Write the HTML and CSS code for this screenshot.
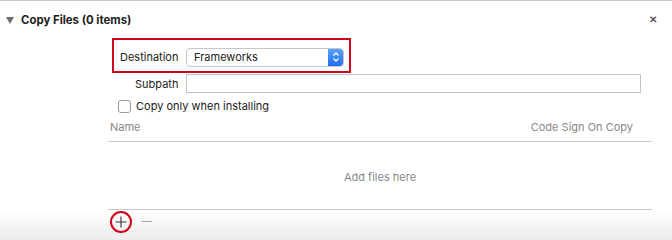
FILE: index.html
```html
<!DOCTYPE html>
<html lang="en">
<head>
	<meta charset="utf-8">
	<title>Copy Files</title>
	<link rel="stylesheet" href="styles.css">
</head>
<body>
	<div class="phase">
		<div class="phaseHead">
			<span class="disclosure"></span>
			<strong class="phaseTitle">Copy Files (0 items)</strong>
			<button type="button" class="btnClose">&#x2715;</button>
		</div>
		<div class="phaseBody">
			<div class="row destRow">
				<div class="highlight">
					<label class="lbl">Destination</label>
					<div class="popup">
						<span class="popupText">Frameworks</span>
						<span class="stepper">
							<svg width="8" height="12" viewBox="0 0 8 12"><path d="M1.5 4.5 L4 2 L6.5 4.5 M1.5 7.5 L4 10 L6.5 7.5" fill="none" stroke="#fff" stroke-width="1.3"/></svg>
						</span>
					</div>
				</div>
			</div>
			<div class="row subRow">
				<label class="lbl">Subpath</label>
				<input type="text" class="ipt">
			</div>
			<div class="row checkRow">
				<span class="check"></span>
				<span class="checkText">Copy only when installing</span>
			</div>
			<div class="fileTable">
				<div class="tableHead">
					<span>Name</span>
					<span>Code Sign On Copy</span>
				</div>
				<div class="tableEmpty">Add files here</div>
			</div>
		</div>
		<div class="phaseFoot">
			<span class="btnAdd">
				<svg width="12" height="12" viewBox="0 0 12 12"><path d="M6 0.5 V11.5 M0.5 6 H11.5" stroke="#333" stroke-width="1.1"/></svg>
			</span>
			<span class="btnRemove"></span>
		</div>
	</div>
</body>
</html>
```

FILE: styles.css
```css
* {margin:0; padding:0; box-sizing:border-box;}
body {width:672px; height:240px; overflow:hidden; background:#fff; font-family:Inter, "Liberation Sans", sans-serif; font-size:11px; color:#222;}
.phase {position:relative; width:672px; height:240px; border-top:1px solid #c8c8c8;}
.phaseHead {display:flex; align-items:center; height:37px; padding-left:6px; padding-right:13px;}
.disclosure {width:0; height:0; border-left:4px solid transparent; border-right:4px solid transparent; border-top:7px solid #6e6e6e; margin-right:7px; margin-top:1px;}
.phaseTitle {flex:1; font-size:11.4px; font-weight:700; color:#222;}
.btnClose {border:0; background:none; font-size:10px; color:#555; font-weight:700; width:12px;}
.phaseBody {padding-left:108px; padding-right:20px;}
.row {display:flex; align-items:center;}
.highlight {display:flex; align-items:center; width:239px; height:35px; margin-left:4px; border:2px solid #d0021b; padding:3px 0 0 6px;}
.lbl {font-size:11px; color:#222; width:66px;}
.popup {display:flex; align-items:center; width:158px; height:19px; border:1px solid #c6c6c6; border-radius:4px; background:#fff; overflow:hidden;}
.popupText {flex:1; padding-left:7px; font-size:11px;}
.stepper {display:flex; align-items:center; justify-content:center; width:15px; height:17px; background:linear-gradient(#5aa2fb, #1f6ef0); border-radius:0 3px 3px 0;}
.subRow {margin-top:1px; padding-left:27px;}
.subRow .lbl {width:51px;}
.ipt {width:455px; height:19px; border:1px solid #c3c3c3; background:#fff;}
.checkRow {margin-top:6px; padding-left:10px;}
.check {width:13px; height:13px; border:1px solid #9a9a9a; border-radius:3px; background:#fff; margin-right:5px;}
.checkText {font-size:11px;}
.fileTable {margin-top:6px; width:544px;}
.tableHead {display:flex; justify-content:space-between; padding:0 19px 6px 2px; height:23px; align-items:center; color:#888; font-size:11px; border-bottom:1px solid #c8c8c8;}
.tableEmpty {height:68px; display:flex; align-items:center; justify-content:center; color:#888; font-size:11px; border-bottom:1px solid #c8c8c8; padding-top:3px;}
.phaseFoot {position:absolute; left:0; right:0; bottom:0; height:30px; background:linear-gradient(#ffffff, #ececec); display:flex; align-items:center; padding-left:110px; padding-bottom:7px;}
.btnAdd {display:flex; align-items:center; justify-content:center; width:22px; height:22px; border:2px solid #d0021b; border-radius:50%;}
.btnRemove {width:11px; height:1px; background:#aaa; margin-left:9px;}
```
